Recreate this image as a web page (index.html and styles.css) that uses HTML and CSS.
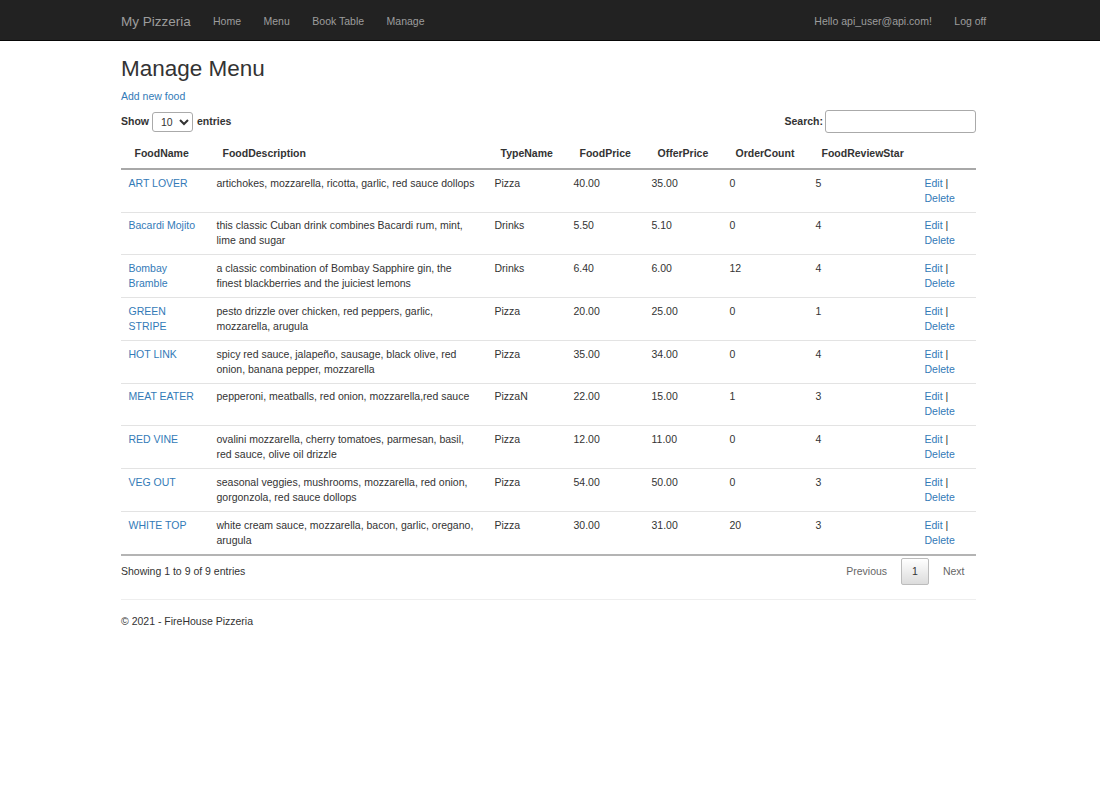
FILE: index.html
```html
<!DOCTYPE html>
<html lang="en">
<head>
<meta charset="utf-8">
<title>Manage Menu - My Pizzeria</title>
<link rel="stylesheet" href="styles.css">
</head>
<body>
<nav class="navbar">
  <div class="container navbar-inner">
    <a class="brand" href="#">My Pizzeria</a>
    <ul class="nav">
      <li><a href="#">Home</a></li>
      <li><a href="#">Menu</a></li>
      <li><a href="#">Book Table</a></li>
      <li><a href="#">Manage</a></li>
    </ul>
    <ul class="nav nav-right">
      <li><a href="#">Hello api_user@api.com!</a></li>
      <li><a href="#">Log off</a></li>
    </ul>
  </div>
</nav>

<main class="container body-content">
  <h2 class="title">Manage Menu</h2>
  <p class="add"><a href="#">Add new food</a></p>

  <div class="dt-wrapper">
    <div class="dt-top">
      <label class="dt-length">Show
        <select class="dt-select">
          <option>10</option>
          <option>25</option>
          <option>50</option>
          <option>100</option>
        </select>
        entries</label>
      <label class="dt-filter">Search:<input class="dt-search" type="search"></label>
    </div>

    <table class="dt-table">
      <colgroup>
        <col class="c-name"><col class="c-desc"><col class="c-type"><col class="c-price"><col class="c-offer"><col class="c-count"><col class="c-star"><col class="c-act">
      </colgroup>
      <thead>
        <tr>
          <th>FoodName</th>
          <th>FoodDescription</th>
          <th>TypeName</th>
          <th>FoodPrice</th>
          <th>OfferPrice</th>
          <th>OrderCount</th>
          <th>FoodReviewStar</th>
          <th></th>
        </tr>
      </thead>
      <tbody>
        <tr>
          <td><a href="#">ART LOVER</a></td>
          <td>artichokes, mozzarella, ricotta, garlic, red sauce dollops</td>
          <td>Pizza</td><td>40.00</td><td>35.00</td><td>0</td><td>5</td>
          <td><a href="#">Edit</a> | <a href="#">Delete</a></td>
        </tr>
        <tr>
          <td><a href="#">Bacardi Mojito</a></td>
          <td>this classic Cuban drink combines Bacardi rum, mint, lime and sugar</td>
          <td>Drinks</td><td>5.50</td><td>5.10</td><td>0</td><td>4</td>
          <td><a href="#">Edit</a> | <a href="#">Delete</a></td>
        </tr>
        <tr>
          <td><a href="#">Bombay Bramble</a></td>
          <td>a classic combination of Bombay Sapphire gin, the finest blackberries and the juiciest lemons</td>
          <td>Drinks</td><td>6.40</td><td>6.00</td><td>12</td><td>4</td>
          <td><a href="#">Edit</a> | <a href="#">Delete</a></td>
        </tr>
        <tr>
          <td><a href="#">GREEN STRIPE</a></td>
          <td>pesto drizzle over chicken, red peppers, garlic, mozzarella, arugula</td>
          <td>Pizza</td><td>20.00</td><td>25.00</td><td>0</td><td>1</td>
          <td><a href="#">Edit</a> | <a href="#">Delete</a></td>
        </tr>
        <tr>
          <td><a href="#">HOT LINK</a></td>
          <td>spicy red sauce, jalapeño, sausage, black olive, red onion, banana pepper, mozzarella</td>
          <td>Pizza</td><td>35.00</td><td>34.00</td><td>0</td><td>4</td>
          <td><a href="#">Edit</a> | <a href="#">Delete</a></td>
        </tr>
        <tr>
          <td><a href="#">MEAT EATER</a></td>
          <td>pepperoni, meatballs, red onion, mozzarella,red sauce</td>
          <td>PizzaN</td><td>22.00</td><td>15.00</td><td>1</td><td>3</td>
          <td><a href="#">Edit</a> | <a href="#">Delete</a></td>
        </tr>
        <tr>
          <td><a href="#">RED VINE</a></td>
          <td>ovalini mozzarella, cherry tomatoes, parmesan, basil, red sauce, olive oil drizzle</td>
          <td>Pizza</td><td>12.00</td><td>11.00</td><td>0</td><td>4</td>
          <td><a href="#">Edit</a> | <a href="#">Delete</a></td>
        </tr>
        <tr>
          <td><a href="#">VEG OUT</a></td>
          <td>seasonal veggies, mushrooms, mozzarella, red onion, gorgonzola, red sauce dollops</td>
          <td>Pizza</td><td>54.00</td><td>50.00</td><td>0</td><td>3</td>
          <td><a href="#">Edit</a> | <a href="#">Delete</a></td>
        </tr>
        <tr>
          <td><a href="#">WHITE TOP</a></td>
          <td>white cream sauce, mozzarella, bacon, garlic, oregano, arugula</td>
          <td>Pizza</td><td>30.00</td><td>31.00</td><td>20</td><td>3</td>
          <td><a href="#">Edit</a> | <a href="#">Delete</a></td>
        </tr>
      </tbody>
    </table>

    <div class="dt-bottom">
      <div class="dt-info">Showing 1 to 9 of 9 entries</div>
      <div class="dt-paginate">
        <a class="pg-btn disabled" href="#">Previous</a>
        <a class="pg-btn current" href="#">1</a>
        <a class="pg-btn disabled" href="#">Next</a>
      </div>
    </div>
  </div>

  <hr class="rule">
  <footer class="footer">
    <p>&copy; 2021 - FireHouse Pizzeria</p>
  </footer>
</main>
</body>
</html>
```

FILE: styles.css
```css
* {
  box-sizing: border-box;
}

html, body {
  margin: 0;
  padding: 0;
  background: #fff;
}

body {
  font-family: "Liberation Sans", Arial, Helvetica, sans-serif;
  font-size: 10.5px;
  line-height: 15px;
  color: #333;
}

a {
  color: #337ab7;
  text-decoration: none;
}

.container {
  width: 858px;
  padding-right: 3px;
  margin: 0 auto;
}

/* Navbar */
.navbar {
  background: #222;
  border-bottom: 1px solid #080808;
  height: 41px;
}

.navbar-inner {
  display: flex;
  align-items: center;
  height: 40px;
  padding-top: 3px;
}

.brand {
  color: #9d9d9d;
  font-size: 13.5px;
  line-height: 15px;
  padding-right: 11px;
}

.nav {
  list-style: none;
  margin: 0;
  padding: 0;
  display: flex;
}

.nav a {
  display: block;
  color: #9d9d9d;
  padding: 0 11.25px;
  font-size: 10.5px;
}

.nav-right {
  margin-left: auto;
  margin-right: -21.5px;
}

/* Heading */
.title {
  font-size: 22.5px;
  font-weight: 500;
  line-height: 1.1;
  margin: 16px 0 7px;
  color: #333;
}

.add {
  margin: 0 0 7.5px;
}

/* DataTables-like */
.dt-top {
  display: flex;
  justify-content: space-between;
  align-items: center;
  height: 23px;
  margin-top: -1px;
}

.dt-length,
.dt-filter {
  font-weight: bold;
  color: #333;
  display: flex;
  align-items: center;
}

.dt-select {
  width: 41px;
  height: 20px;
  margin: 0 4px 0 3px;
  border: 1px solid #aaa;
  border-radius: 3px;
  background: #fff;
  font-family: inherit;
  font-size: 10.5px;
  padding: 0 0 0 4px;
  color: #333;
}

.dt-search {
  width: 151px;
  height: 23px;
  margin-left: 2px;
  border: 1px solid #aaa;
  border-radius: 3px;
  background: #fff;
  padding: 3px;
}

.dt-table {
  width: 100%;
  table-layout: fixed;
  border-collapse: separate;
  border-spacing: 0;
  margin-top: 5px;
  border-bottom: 2px solid #b4b4b4;
}

.c-name { width: 88px; }
.c-desc { width: 278px; }
.c-type { width: 79px; }
.c-price { width: 78px; }
.c-offer { width: 78px; }
.c-count { width: 86px; }
.c-star { width: 109px; }
.c-act { width: 59px; }

.dt-table th {
  text-align: left;
  font-weight: bold;
  padding: 7.5px 13.5px 7px 13.5px;
  border-bottom: 2px solid #a8a8a8;
  white-space: nowrap;
}

.dt-table td {
  padding: 5.875px 7.5px;
  vertical-align: top;
  border-top: 1px solid #e3e3e3;
}

.dt-table tbody tr:first-child td {
  border-top: none;
}

.dt-bottom {
  display: flex;
  justify-content: space-between;
  align-items: flex-start;
}

.dt-info {
  padding-top: 8px;
}

.dt-paginate {
  padding-top: 2px;
  display: flex;
}

.pg-btn {
  display: block;
  min-width: 16px;
  padding: 5.25px 10.5px;
  margin-left: 2px;
  border: 1px solid transparent;
  border-radius: 2px;
  text-align: center;
  color: #333;
}

.pg-btn.disabled {
  color: #666;
}

.pg-btn.current {
  color: #333;
  border: 1px solid #bcbcbc;
  background: linear-gradient(to bottom, #fff 0%, #dcdcdc 100%);
}

.rule {
  margin: 14px 0;
  border: 0;
  border-top: 1px solid #eee;
}

.footer p {
  margin: 0 0 7.5px;
}
```
